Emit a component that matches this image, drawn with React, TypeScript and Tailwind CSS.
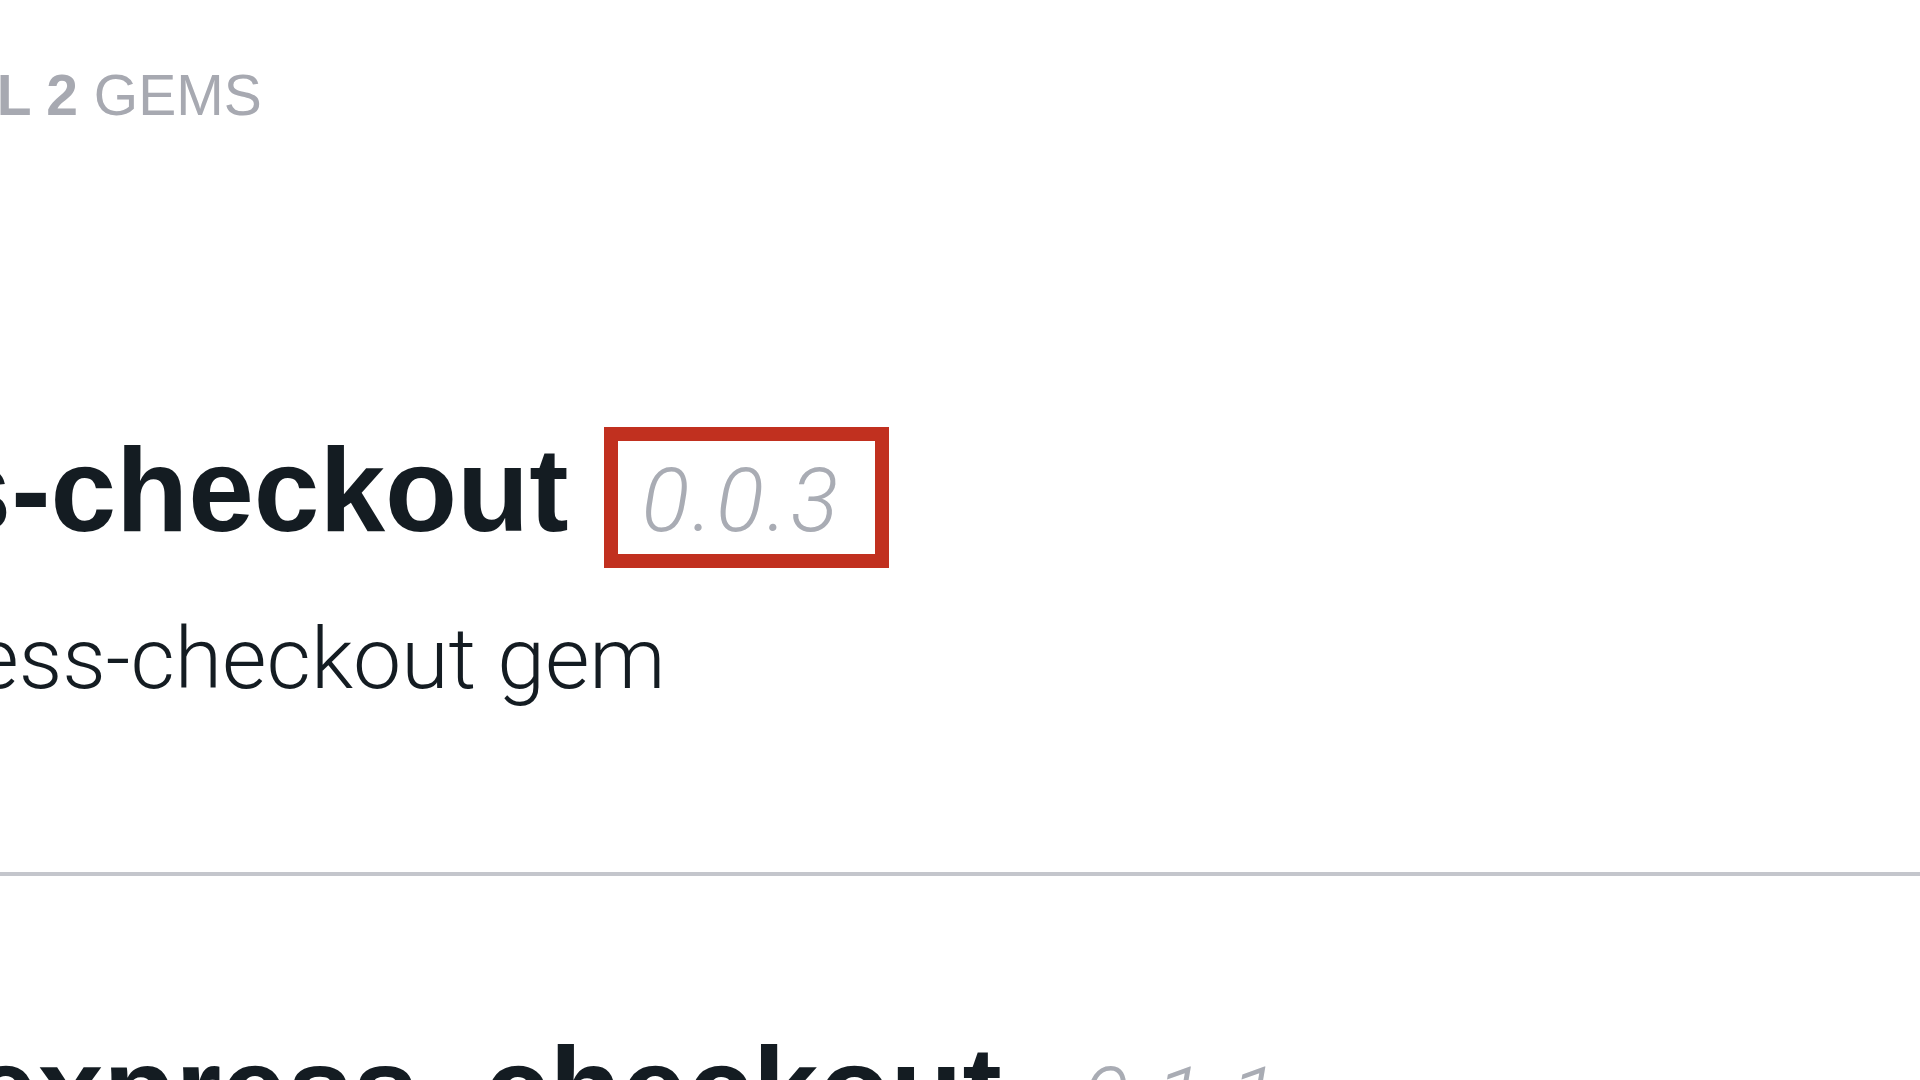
import React from "react";

type Gem = {
  name: string;
  version: string;
  info?: string;
  marked?: boolean;
};

const gems: Gem[] = [
  { name: "express-checkout", version: "0.0.3", info: "express-checkout gem", marked: true },
  { name: "express_checkout", version: "0.1.1" },
];

function GemRow({ gem, shift }: { gem: Gem; shift: string }) {
  return (
    <div className={`flex items-baseline whitespace-nowrap ${shift}`}>
      <h2 className="font-['Liberation_Sans',Arial,sans-serif] text-[118px] leading-none font-bold text-[#141c22]">
        {gem.name}
      </h2>
      <span
        className={
          gem.marked
            ? "ml-[36px] w-[285px] border-[14px] border-[#c1301f] pt-[15px] pb-[9px] pl-[23px] font-['Roboto',sans-serif] text-[89px] leading-none tracking-[3px] font-light italic text-[#a9acb4]"
            : "ml-[36px] w-[285px] border-[14px] border-transparent pt-[15px] pb-[9px] pl-[29px] font-['Roboto',sans-serif] text-[89px] leading-none tracking-[3px] font-light italic text-[#a9acb4]"
        }
      >
        {gem.version}
      </span>
    </div>
  );
}

export default function App() {
  return (
    <div className="w-[1920px] h-[1080px] overflow-hidden bg-white">
      {/* results counter */}
      <p className="mt-[67px] -ml-[433px] whitespace-nowrap font-['Liberation_Sans',Arial,sans-serif] text-[57px] leading-none uppercase text-[#a7a9b1]">
        Displaying <b className="font-bold">all 2</b> gems
      </p>

      <ul className="mt-[303px]">
        <li className="border-b-4 border-[#c4c6cc] pb-[170px]">
          <GemRow gem={gems[0]} shift="-ml-[435px]" />
          <p className="mt-[48px] -ml-[188px] whitespace-nowrap font-['Roboto',sans-serif] text-[86px] leading-none font-light text-[#141c22]">
            {gems[0].info}
          </p>
        </li>
        <li className="pt-[150px]">
          <GemRow gem={gems[1]} shift="-ml-[28px]" />
        </li>
      </ul>
    </div>
  );
}
